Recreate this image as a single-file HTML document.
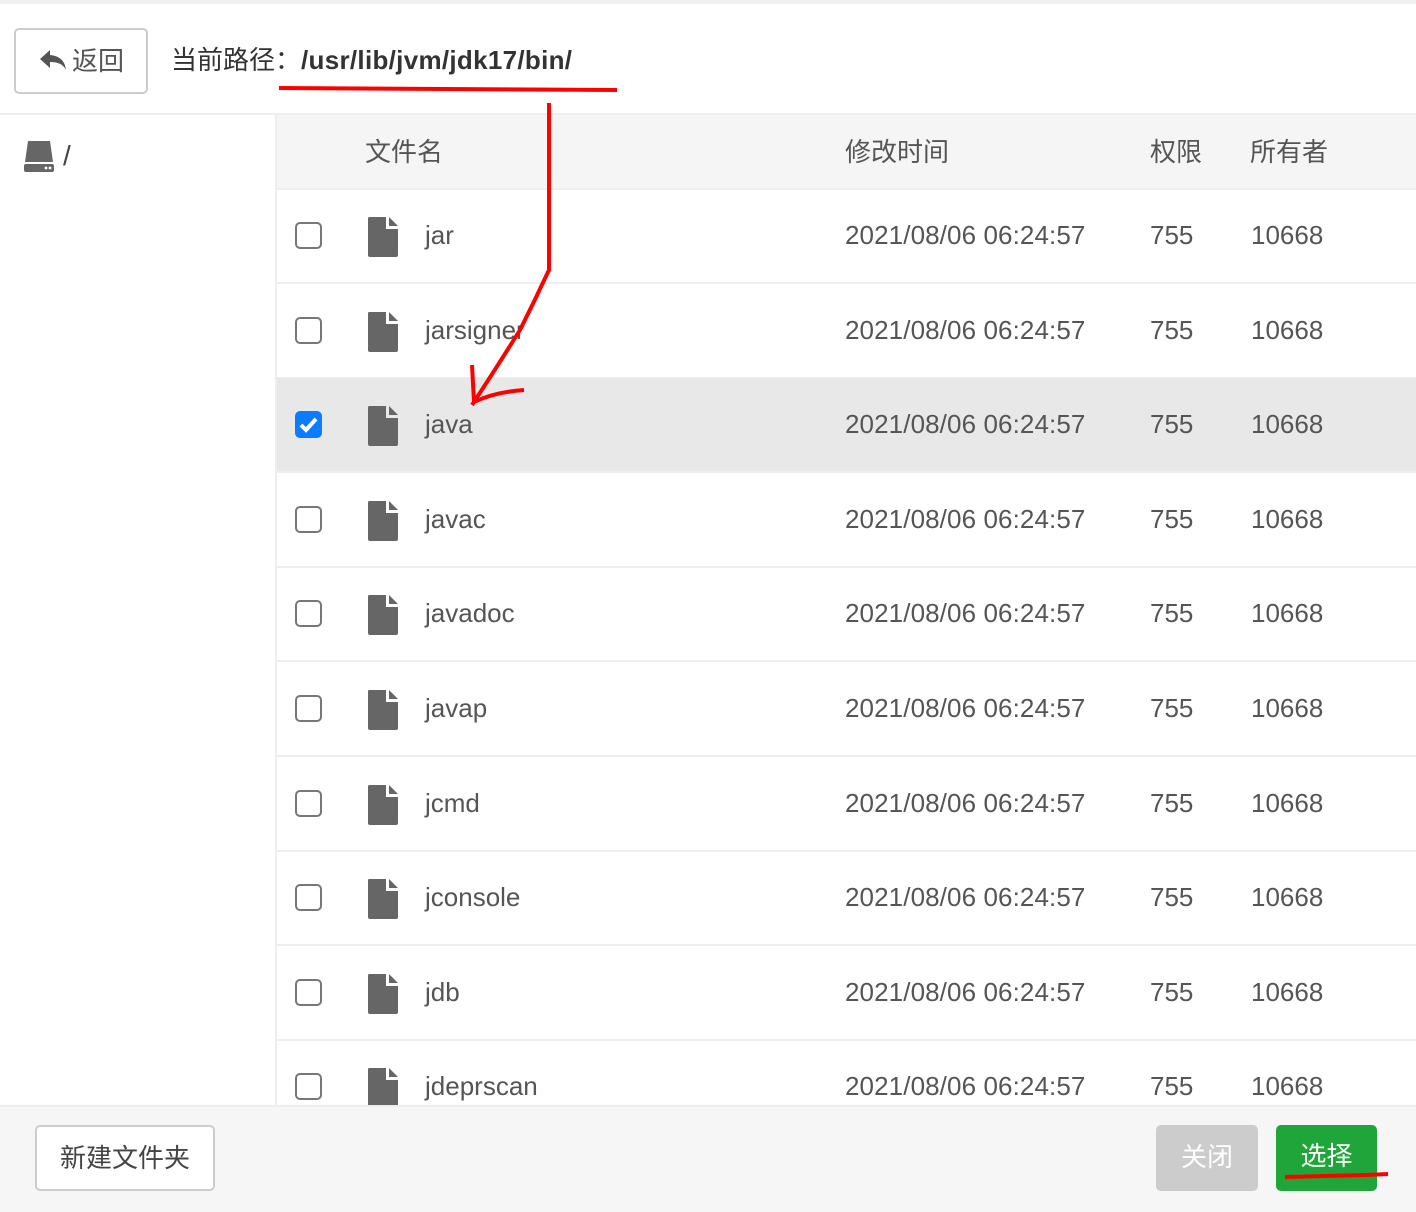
<!DOCTYPE html>
<html><head><meta charset="utf-8"><style>
*{margin:0;padding:0;box-sizing:border-box}
body{width:1416px;height:1212px;position:relative;overflow:hidden;background:#fff;font-family:"Liberation Sans","Noto Sans CJK SC",sans-serif;color:#555}
.abs{position:absolute}
.row{position:absolute;left:277px;width:1139px;height:95px;border-bottom:2px solid #eee}
.row span{position:absolute;top:29px;font-size:26px;color:#555;line-height:34px}
.cb{position:absolute;left:18px;top:33px;width:27px;height:27px;border:2px solid #777;border-radius:5px;background:#fff}
.fi{position:absolute;left:90px;top:28px}
</style></head><body>
<div class="abs" style="left:0;top:0;width:1416px;height:4px;background:#f0f0f0"></div>
<div class="abs" style="left:14px;top:28px;width:134px;height:66px;border:2px solid #ccc;border-radius:5px;font-size:26px;line-height:62px;padding-left:22px;color:#555">
<svg width="30" height="24" viewBox="0 0 30 24" style="vertical-align:-2px;margin-right:4px"><path d="M12 2 L2 11 L12 20 L12 14 C20 14 25 16 28 22 C27 13 22 8 12 7 Z" fill="#555"/></svg>返回</div>
<div class="abs" style="left:171px;top:42px;font-size:26px;line-height:36px;color:#333">当前路径：<b style="color:#333;font-size:26px;letter-spacing:0.3px">/usr/lib/jvm/jdk17/bin/</b></div>
<div class="abs" style="left:0;top:113px;width:1416px;height:2px;background:#eee"></div>
<div class="abs" style="left:275px;top:115px;width:2px;height:990px;background:#eee"></div>
<svg class="abs" style="left:23px;top:140px" width="32" height="32" viewBox="0 0 32 32"><path d="M5 1 H27 L30 22 H2 Z" fill="#666"/><rect x="1" y="24" width="30" height="8" rx="2" fill="#666"/><circle cx="23" cy="28" r="1.4" fill="#fff"/><circle cx="27" cy="28" r="1.4" fill="#fff"/></svg>
<div class="abs" style="left:63px;top:140px;font-size:28px;color:#444">/</div>
<div class="abs" style="left:277px;top:115px;width:1139px;height:75px;background:#f5f5f5;border-bottom:2px solid #eee">
<span class="abs" style="left:88px;top:17px;font-size:26px;color:#555">文件名</span>
<span class="abs" style="left:568px;top:17px;font-size:26px;color:#555">修改时间</span>
<span class="abs" style="left:873px;top:17px;font-size:26px;color:#555">权限</span>
<span class="abs" style="left:973px;top:17px;font-size:26px;color:#555">所有者</span>
</div>
<div id="rows"></div>
<script>
var n=["jar","jarsigner","java","javac","javadoc","javap","jcmd","jconsole","jdb","jdeprscan"],h="";
n.forEach(function(x,i){var t=189+i*94.6,s=i==2;
h+='<div class="row" style="top:'+t+'px;'+(s?'background:#e8e8e8':'')+'">'+
(s?'<div class="cb" style="border:none;background:#0a7cff;border-radius:5px"><svg width="27" height="27" viewBox="0 0 27 27"><path d="M6 14 L11 19 L21 8" stroke="#fff" stroke-width="4" fill="none"/></svg></div>':'<div class="cb"></div>')+
'<svg class="fi" width="32" height="40" viewBox="0 0 32 40"><path d="M2 0 H19 V12 H31 V38 Q31 40 29 40 H3 Q1 40 1 38 V2 Q1 0 2 0Z M22 0 L31 9 H22Z" fill="#666"/></svg>'+
'<span style="left:148px">'+x+'</span><span style="left:568px;letter-spacing:0.1px">2021/08/06 06:24:57</span><span style="left:873px">755</span><span style="left:974px">10668</span></div>';});
document.getElementById("rows").innerHTML=h;
</script>
<div class="abs" style="left:0;top:1105px;width:1416px;height:107px;background:#f5f6f5;border-top:2px solid #eee"></div>
<div class="abs" style="left:35px;top:1125px;width:180px;height:66px;border:2px solid #ccc;border-radius:5px;background:#fff;font-size:26px;line-height:62px;text-align:center;color:#444">新建文件夹</div>
<div class="abs" style="left:1156px;top:1125px;width:102px;height:66px;border-radius:5px;background:#ccc;font-size:26px;line-height:64px;text-align:center;color:#fff">关闭</div>
<div class="abs" style="left:1276px;top:1125px;width:101px;height:66px;border-radius:5px;background:#20a53a;font-size:26px;line-height:62px;text-align:center;color:#fff">选择</div>
<svg class="abs" style="left:0;top:0" width="1416" height="1212">
<path d="M279 88 L617 90" stroke="#f00" stroke-width="4" fill="none"/>
<path d="M549 103 L549 270 Q535 300 520 330 Q495 370 472 405 M472 365 L474 402 Q495 392 524 390" stroke="#f00" stroke-width="4" fill="none"/>
<path d="M1285 1177 L1366 1175 L1388 1174" stroke="#f00" stroke-width="4" fill="none"/>
</svg>
</body></html>
